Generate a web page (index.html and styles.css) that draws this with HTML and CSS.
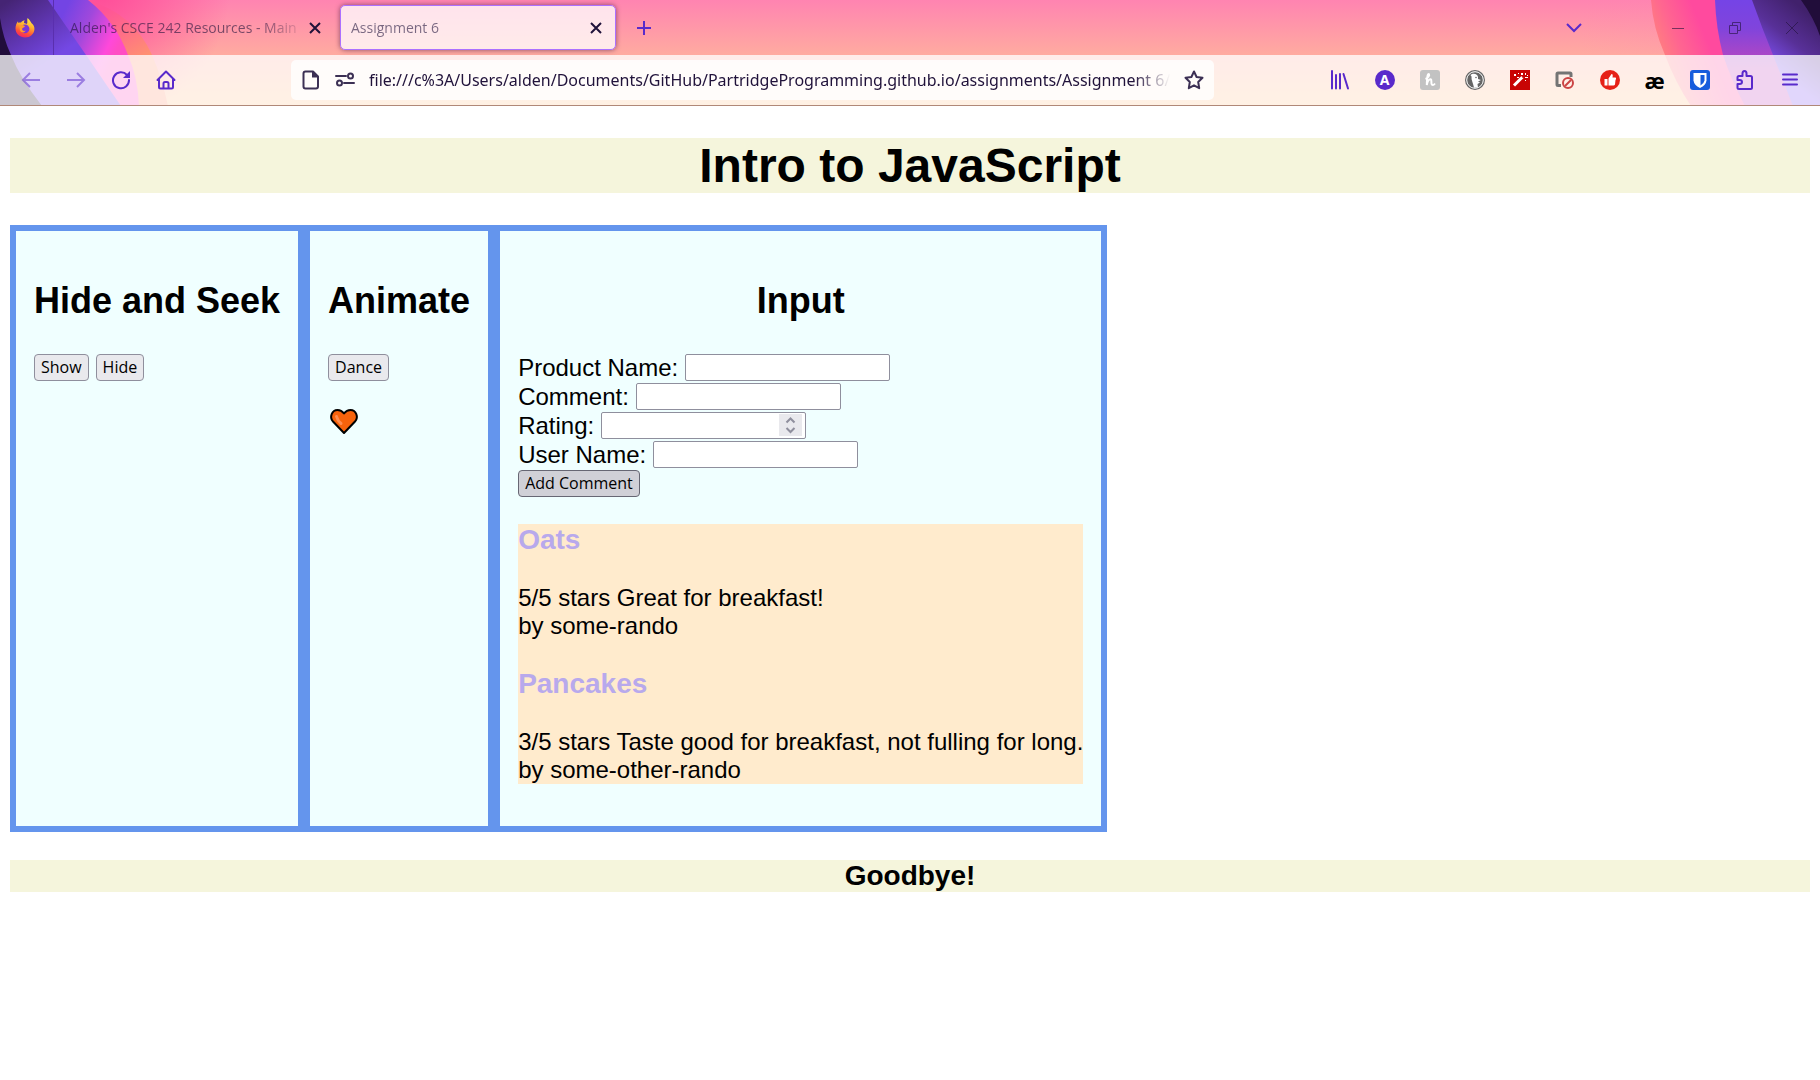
FILE: index.html
```html
<!DOCTYPE html>
<html lang="en">
<head>
<meta charset="utf-8">
<title>Assignment 6</title>
<link rel="stylesheet" href="styles.css">
</head>
<body>
<div class="browser">
  <svg class="art art-left" width="400" height="106" viewBox="0 0 400 106" aria-hidden="true">
    <defs>
      <linearGradient id="violet" gradientUnits="userSpaceOnUse" x1="10" y1="0" x2="50" y2="60"><stop offset="0" stop-color="#452474"/><stop offset="0.6" stop-color="#6238b8"/><stop offset="1" stop-color="#7448e4"/></linearGradient>
      <linearGradient id="mix" gradientUnits="userSpaceOnUse" x1="62" y1="28" x2="108" y2="8"><stop offset="0" stop-color="#7344e4"/><stop offset="0.45" stop-color="#9a4ad6"/><stop offset="1" stop-color="#e84cc0"/></linearGradient>
      <linearGradient id="magenta" gradientUnits="userSpaceOnUse" x1="60" y1="20" x2="118" y2="48"><stop offset="0" stop-color="#7344e4"/><stop offset="0.4" stop-color="#a048dc"/><stop offset="0.85" stop-color="#ff48da"/><stop offset="1" stop-color="#ff4cc4"/></linearGradient>
      <linearGradient id="coral" gradientUnits="userSpaceOnUse" x1="110" y1="5" x2="140" y2="60"><stop offset="0" stop-color="#ff5298"/><stop offset="0.5" stop-color="#ff6f86"/><stop offset="1" stop-color="#ff9270"/></linearGradient>
      <radialGradient id="glow" gradientUnits="userSpaceOnUse" cx="100" cy="-10" r="130"><stop offset="0" stop-color="#ff4c98"/><stop offset="1" stop-color="#ff4c98" stop-opacity="0"/></radialGradient>
    </defs>
    <path fill="url(#glow)" d="M0 0H400V106H0Z"/>
    <path fill="url(#coral)" d="M0 0H88Q134 14 152 55Q162 78 168 106H0Z"/>
    <path fill="url(#magenta)" d="M0 0H88Q116 22 128 55Q138 78 139 106H0Z"/>
    <path fill="url(#violet)" d="M0 0H48L86 55L121 106H0Z"/>
    <path fill="#210d3a" d="M0 18Q3 38 11 55Q20 78 42 106H0Z"/>
  </svg>
  <svg class="art art-right" width="300" height="106" viewBox="0 0 300 106" aria-hidden="true">
    <defs>
      <linearGradient id="pink" gradientUnits="userSpaceOnUse" x1="130" y1="50" x2="182" y2="28"><stop offset="0" stop-color="#ff8a78"/><stop offset="0.5" stop-color="#ff6690"/><stop offset="1" stop-color="#ff4a9e"/></linearGradient>
      <linearGradient id="purple" gradientUnits="userSpaceOnUse" x1="0" y1="0" x2="0" y2="70"><stop offset="0" stop-color="#7544e6"/><stop offset="0.4" stop-color="#8044dc"/><stop offset="1" stop-color="#c048bc"/></linearGradient>
      <linearGradient id="night" gradientUnits="userSpaceOnUse" x1="244" y1="60" x2="284" y2="10"><stop offset="0" stop-color="#7d50f0"/><stop offset="0.5" stop-color="#583098"/><stop offset="1" stop-color="#41216c"/></linearGradient>
      <linearGradient id="blush" x1="0" y1="0" x2="1" y2="0"><stop offset="0.2" stop-color="#ff84b4" stop-opacity="0"/><stop offset="1" stop-color="#ff84b4"/></linearGradient>
    </defs>
    <path fill="url(#blush)" d="M0 0H300V54H0Z" opacity="0.4"/>
    <path fill="url(#pink)" d="M131 0Q133 28 145 55Q155 82 171 106H300V0Z"/>
    <path fill="url(#purple)" d="M195 0Q196 28 203 55Q212 82 225 106H300V0Z"/>
    <path fill="url(#night)" d="M232 0Q242 28 253 55L273 106H300V0Z"/>
    <path fill="#210d3a" d="M281 0Q294 18 300 36V0Z"/>
  </svg>

  <div class="tabbar">
    <div class="fox">
      <svg width="20" height="20" viewBox="0 0 20 20" aria-hidden="true">
        <defs><linearGradient id="flame" x1="0.7" y1="0" x2="0.35" y2="1"><stop offset="0" stop-color="#fff04a"/><stop offset="0.4" stop-color="#ffb02e"/><stop offset="0.75" stop-color="#ff4f38"/><stop offset="1" stop-color="#f0226a"/></linearGradient></defs>
        <path fill="url(#flame)" d="M12.6 0C15 2 15.400 3.600 16.600 5.200C18.600 6.600 19.700 9 19.400 11.500C19 16 15.200 19.500 10.200 19.500C4.800 19.500 0.600 15.800 0.500 10.500C0.500 8 1.200 5.500 3 3.200L3.400 5C4.200 4.500 5 4.400 6 4.500C7.200 2.800 8.600 2.300 10 2.400C9 3.200 8.800 4 9.200 5L12 6C12.800 4 11.800 2 12.600 0Z"/>
        <circle cx="10" cy="10.800" r="4.400" fill="#7a35d8"/>
        <path fill="#ff9a2c" d="M4.400 8C6.500 6.500 8.500 7 10 8.200C9.600 9.600 7.800 9.300 7.200 10.600C6.800 12.200 8.500 13.600 10.600 12.600C9.800 15.200 6.500 15.200 5 12.600Z"/>
      </svg>
    </div>
    <div class="tab">
      <a class="tab-title" href="#">Alden's CSCE 242 Resources - Main</a>
      <button class="tab-close" aria-label="Close tab"><svg width="12" height="12" viewBox="0 0 12 12"><path d="M1 1L11 11M11 1L1 11"/></svg></button>
    </div>
    <div class="tab tab-active">
      <a class="tab-title" href="#">Assignment 6</a>
      <button class="tab-close" aria-label="Close tab"><svg width="12" height="12" viewBox="0 0 12 12"><path d="M1 1L11 11M11 1L1 11"/></svg></button>
    </div>
    <button class="chrome-button" aria-label="New tab"><svg width="16" height="16" viewBox="0 0 16 16"><path d="M8 1V15M1 8H15"/></svg></button>
    <button class="chrome-button all-tabs" aria-label="List all tabs"><svg width="16" height="16" viewBox="0 0 16 16"><path d="M1 4L8 11L15 4"/></svg></button>
    <div class="window-buttons">
      <button aria-label="Minimize"><svg width="12" height="12" viewBox="0 0 12 12"><path d="M0 6.500H12"/></svg></button>
      <button aria-label="Restore"><svg width="12" height="12" viewBox="0 0 12 12"><path d="M.5 3.500H8.500V11.500H.5ZM3.500 3.500V.5H11.500V8.500H8.500"/></svg></button>
      <button aria-label="Close window"><svg width="12" height="12" viewBox="0 0 12 12"><path d="M0 0L12 12M12 0L0 12"/></svg></button>
    </div>
  </div>

  <div class="toolbar">
    <button class="chrome-button faded" aria-label="Back"><svg width="20" height="20" viewBox="0 0 20 20"><path d="M19 10H2M9 3L2 10L9 17"/></svg></button>
    <button class="chrome-button faded" aria-label="Forward"><svg width="20" height="20" viewBox="0 0 20 20"><path d="M1 10H18M11 3L18 10L11 17"/></svg></button>
    <button class="chrome-button" aria-label="Reload"><svg width="20" height="20" viewBox="0 0 20 20"><path class="thick" d="M16 5A8 8 0 1 0 18 10"/><path class="solid" d="M19 1V8H12Z"/></svg></button>
    <button class="chrome-button" aria-label="Home"><svg width="20" height="20" viewBox="0 0 20 20"><path class="thick" d="M1.500 10L10 1.500L18.500 10M3 9V17Q3 18.500 4.500 18.500H15.500Q17 18.500 17 17V9M7.500 18V13.500Q7.500 12 9 12H11Q12.500 12 12.500 13.500V18"/></svg></button>

    <div class="address">
      <svg width="20" height="20" viewBox="0 0 20 20" aria-hidden="true"><path class="thick" d="M4.500 1.500H12L17 6.500V16.500Q17 18.500 15 18.500H4.500Q2.500 18.500 2.500 16.500V3.500Q2.500 1.500 4.500 1.500Z"/><path class="solid" d="M11 1V7.500H17.500Z"/></svg>
      <svg width="20" height="20" viewBox="0 0 20 20" aria-hidden="true"><path class="thick" d="M1 6H11M9 13H19"/><circle class="thick" cx="15.500" cy="6" r="2.500"/><circle class="thick" cx="4.500" cy="13" r="2.500"/></svg>
      <input class="url" type="text" aria-label="Address" value="file:///c%3A/Users/alden/Documents/GitHub/PartridgeProgramming.github.io/assignments/Assignment 6/">
      <svg width="20" height="20" viewBox="0 0 20 20" aria-hidden="true"><path class="thick" d="M10 1.500L12.600 7L18.500 7.800L14.200 12L15.200 18.200L10 15.300L4.800 18.200L5.800 12L1.500 7.800L7.400 7Z"/></svg>
    </div>

    <button class="chrome-button" aria-label="Library"><svg width="20" height="20" viewBox="0 0 20 20"><path class="thick" d="M2 1V18.500M6 5V18.500M10 4V18.500M13.500 4L18 18.500"/></svg></button>
    <button class="chrome-button" aria-label="Account"><span class="avatar">A</span></button>
    <button class="chrome-button" aria-label="Honey"><svg width="20" height="20" viewBox="0 0 20 20"><rect width="20" height="20" rx="3" fill="#c2c2c2" stroke="none"/><path d="M5.500 9C8 8 9.800 5.500 9 4.200C8 3.200 7 6 6.800 15C7.500 11 9 9 10.800 9.200C12.200 9.500 10.500 13.500 12 14.800C13 15.500 14.200 14.500 15 13.500" style="stroke:#fff;stroke-width:2"/></svg></button>
    <button class="chrome-button" aria-label="DuckDuckGo"><svg width="20" height="20" viewBox="0 0 20 20"><circle cx="10" cy="10" r="10" fill="#666" stroke="none"/><circle cx="10" cy="10" r="8.300" fill="#666" style="stroke:#fff;stroke-width:1"/><path style="fill:#fff;stroke:none" d="M7 4C10 3 12.800 4.500 13 7L13 9L16 10L13 11.500L15 12.500L12.500 14L13 17.500L9 17.700C8.500 14 6 10 6.500 6.500L5.500 5Z"/><circle cx="11" cy="7.500" r="0.800" fill="#666" stroke="none"/></svg></button>
    <button class="chrome-button" aria-label="Magic wand"><svg width="20" height="20" viewBox="0 0 20 20"><rect width="20" height="20" fill="#c80404" stroke="none"/><path d="M4 15.500L12.500 7" style="stroke:#fff;stroke-width:3"/><path d="M12 6.500L13.500 8" style="stroke:#c80404;stroke-width:1"/><path style="fill:#fff;stroke:none" d="M4 4h2v2H4zM8 3h1v1H8zM7 7h2v1H7zM11 3h2v2h-2zM15 3h1v2h-1zM15 7h3v1h-3zM15 10h1v1h-1zM17 5h1v1h-1z"/></svg></button>
    <button class="chrome-button" aria-label="Pop-up blocker"><svg width="20" height="20" viewBox="0 0 20 20"><path d="M6 15.500H3Q2 15.500 2 14.500V4Q2 3 3 3H15Q16 3 16 4V7" style="stroke:#747474;stroke-width:3"/><circle cx="13" cy="13" r="5" style="fill:#fff0e8;stroke:#cb4444;stroke-width:2"/><path d="M10 16L16 10" style="stroke:#cb4444;stroke-width:2"/></svg></button>
    <button class="chrome-button" aria-label="Thumbs up"><svg width="20" height="20" viewBox="0 0 20 20"><circle cx="10" cy="10" r="10" fill="#e62117" stroke="none"/><path style="fill:#fff;stroke:none" d="M4.500 9H7.500V15.500H4.500ZM8.500 8.500L11.500 4C12.800 4 13 5 12.500 7.500H15.500C16.500 8 16 9.500 15.500 10L15 14.500Q14.500 15.500 13.500 15.500H8.500Z"/></svg></button>
    <button class="chrome-button ligature" aria-label="Alternative links">æ</button>
    <button class="chrome-button" aria-label="Bitwarden"><svg width="20" height="20" viewBox="0 0 20 20"><rect width="20" height="20" rx="3" fill="#175ddc" stroke="none"/><path style="fill:#fff;stroke:none" d="M3.500 3H16.500V10.500Q16 15 10 18Q4 15 3.500 10.500Z"/><path style="fill:#175ddc;stroke:none" d="M10.500 5H14.500V10.500Q14 13.500 10.500 15.500Z"/></svg></button>
    <button class="chrome-button" aria-label="Extensions"><svg width="20" height="20" viewBox="0 0 20 20"><path class="thick" d="M4 6H7.500V3.500Q7.500 1 9.500 1Q11.500 1 11.500 3.500V6H15.500Q17 6 17 7.500V17.500Q17 19 15.500 19H4Q2.500 19 2.500 17.500V14H4.500Q7 14 7 12Q7 10 4.500 10H2.500V7.500Q2.500 6 4 6Z"/></svg></button>
    <button class="chrome-button" aria-label="Menu"><svg width="20" height="20" viewBox="0 0 20 20"><path class="thick" d="M3 4.500H17M3 9.500H17M3 14.500H17"/></svg></button>
  </div>
</div>

<div class="page">
  <h1>Intro to JavaScript</h1>
  <main class="sections">
    <section>
      <h2>Hide and Seek</h2>
      <div class="buttons">
        <button class="action">Show</button>
        <button class="action">Hide</button>
      </div>
    </section>
    <section>
      <h2>Animate</h2>
      <button class="action">Dance</button>
      <svg class="heart" width="32" height="32" viewBox="0 0 32 32" role="img" aria-label="Heart"><path fill="#f7630c" stroke="#000" stroke-width="2" stroke-linejoin="round" d="M16 28L5 16.500C1 12 4 5 9.500 5C12.500 5 14.500 6.500 16 8.500C17.500 6.500 19.500 5 22.500 5C28 5 31 12 27 16.500Z"/><path fill="none" stroke="#ff8d50" stroke-width="3" stroke-linecap="round" d="M8.500 11.500Q9.500 15.500 13 18.500"/></svg>
    </section>
    <section>
      <h2>Input</h2>
      <form class="comment-form">
        <div class="field"><label for="product">Product Name:</label><input id="product" type="text"></div>
        <div class="field"><label for="comment">Comment:</label><input id="comment" type="text"></div>
        <div class="field"><label for="rating">Rating:</label><span class="number"><input id="rating" type="number"><svg class="spinner" width="23" height="22" viewBox="0 0 23 22" aria-hidden="true"><path d="M7.500 8.500L11.500 4.500L15.500 8.500M7.500 14L11.500 18L15.500 14"/></svg></span></div>
        <div class="field"><label for="user">User Name:</label><input id="user" type="text"></div>
        <button class="action pressed" type="button">Add Comment</button>
      </form>
      <div class="comments">
        <h3>Oats</h3>
        <p>5/5 stars Great for breakfast!<br>by some-rando</p>
        <h3>Pancakes</h3>
        <p>3/5 stars Taste good for breakfast, not fulling for long.<br>by some-other-rando</p>
      </div>
    </section>
  </main>
  <footer>Goodbye!</footer>
</div>
</body>
</html>
```
FILE: styles.css
```css
* { box-sizing: border-box; }

body {
  margin: 0;
  background: #fff;
  color: #000;
  font-family: "Liberation Sans", Arial, sans-serif;
  font-size: 24px;
  line-height: 28px;
}

button, input { font-family: "Noto Sans", "Open Sans", sans-serif; font-size: 16px; }

/* Browser window */
.browser {
  position: relative;
  overflow: hidden;
  background: linear-gradient(#ff84b1, #ffaba0 52%, #ffc28a);
}
.browser button {
  display: flex;
  align-items: center;
  justify-content: center;
  padding: 0;
  border: 0;
  background: none;
}
.browser svg { display: block; flex: none; fill: none; stroke: #592acb; }
.browser .art { stroke: none; }
.browser .thick { stroke-width: 2; stroke-linejoin: round; stroke-linecap: round; }
.browser .solid { fill: #592acb; stroke: none; }

.art { position: absolute; top: 0; }
.art-left { left: 0; }
.art-right { right: 0; }

.tabbar { position: relative; display: flex; align-items: center; height: 55px; }
.fox {
  display: flex;
  align-items: center;
  width: 54px;
  height: 100%;
  padding-left: 15px;
  border-right: 1px solid #5a2fae;
}
.browser .fox svg { stroke: none; }
.tab {
  display: flex;
  align-items: center;
  justify-content: space-between;
  width: 276px;
  height: 45px;
  margin-right: 5px;
  padding: 0 10px;
  border: 1px solid transparent;
  border-radius: 5px;
}
.tab:nth-child(2) { margin-left: 5px; margin-right: 5px; }
.tab-active {
  border-color: #ac70ff;
  background: rgba(255, 255, 255, 0.77);
  box-shadow: 0 0 5px rgba(60, 20, 60, 0.6);
}
.tab-title {
  flex: 1;
  overflow: hidden;
  white-space: nowrap;
  color: rgba(32, 18, 58, 0.6);
  font-family: "Open Sans", sans-serif;
  font-size: 14px;
  text-decoration: none;
  mask-image: linear-gradient(90deg, #000 190px, transparent 240px);
}
.tab-close { width: 18px; height: 24px; }
.tab-close svg { stroke: #20123a; stroke-width: 2; }
.chrome-button { flex: none; width: 45px; height: 40px; color: #592acb; }
.tabbar .chrome-button svg { stroke-width: 2; }
.all-tabs { margin-left: auto; margin-right: 53px; }
.window-buttons { display: flex; }
.window-buttons button { width: 57px; height: 54px; }
.window-buttons svg { stroke: #20123a; opacity: 0.6; }

.toolbar {
  position: relative;
  display: flex;
  align-items: center;
  height: 51px;
  padding: 0 8px;
  border-bottom: 1px solid #b08878;
  background: rgba(255, 255, 255, 0.77);
}
.toolbar .faded { opacity: 0.5; }
.faded svg { stroke-width: 2; }
.address {
  display: flex;
  flex: 1;
  align-items: center;
  gap: 14px;
  height: 40px;
  min-width: 0;
  margin: 0 103px;
  padding: 0 10px;
  border-radius: 5px;
  background: rgba(255, 255, 255, 0.8);
}
.address svg { stroke: #3c3054; }
.address .solid { fill: #3c3054; }
.url {
  flex: 1;
  min-width: 0;
  height: 32px;
  padding: 0;
  border: 0;
  background: none;
  color: #20123a;
  mask-image: linear-gradient(90deg, #000 calc(100% - 36px), transparent);
}
.avatar {
  width: 20px;
  border-radius: 10px;
  background: #592acb;
  color: #fff;
  font-size: 14px;
  font-weight: 700;
  line-height: 20px;
}
.browser .ligature { color: #000; font-size: 22px; font-weight: 700; }

/* Page */
.page { padding: 32px 10px; }
h1 {
  margin: 0 0 32px;
  background: beige;
  font-size: 48px;
  line-height: 55px;
  text-align: center;
}
.sections { display: flex; width: max-content; max-width: 100%; margin-bottom: 28px; }
section {
  padding: 18px 18px 42px;
  border: 6px solid cornflowerblue;
  background: azure;
}
h2 { margin: 30px 0 32px; font-size: 36px; line-height: 43px; text-align: center; }

.buttons { display: flex; gap: 7px; }
.action {
  display: block;
  height: 27px;
  padding: 0 6px;
  border: 1px solid #8f8f9d;
  border-radius: 4px;
  background: #e9e9ed;
  color: #000;
  font-family: "Open Sans", sans-serif;
  line-height: 25px;
}
.pressed { border-color: #676774; background: #d0d0d7; }
.heart { display: block; margin-top: 24px; }

.comment-form { display: flex; flex-direction: column; align-items: flex-start; gap: 2px; }
.field { display: flex; align-items: center; gap: 7px; height: 27px; }
.field input {
  display: block;
  width: 205px;
  height: 27px;
  border: 1px solid #8f8f9d;
  border-radius: 2px;
  background: #fff;
}
.number { position: relative; }
.number input { appearance: textfield; }
.spinner {
  position: absolute;
  top: 2px;
  right: 4px;
  background: #e9e9ed;
  fill: none;
  stroke: #8f8f9d;
  stroke-width: 2;
}

.comments { margin-top: 27px; background: blanchedalmond; }
h3 { margin: 0 0 28px; color: #b8a9ec; font-size: 28px; line-height: 32px; }
.comments p { margin: 0 0 28px; }
.comments p:last-child { margin: 0; }

footer { background: beige; font-size: 28px; font-weight: 700; line-height: 32px; text-align: center; }
```
